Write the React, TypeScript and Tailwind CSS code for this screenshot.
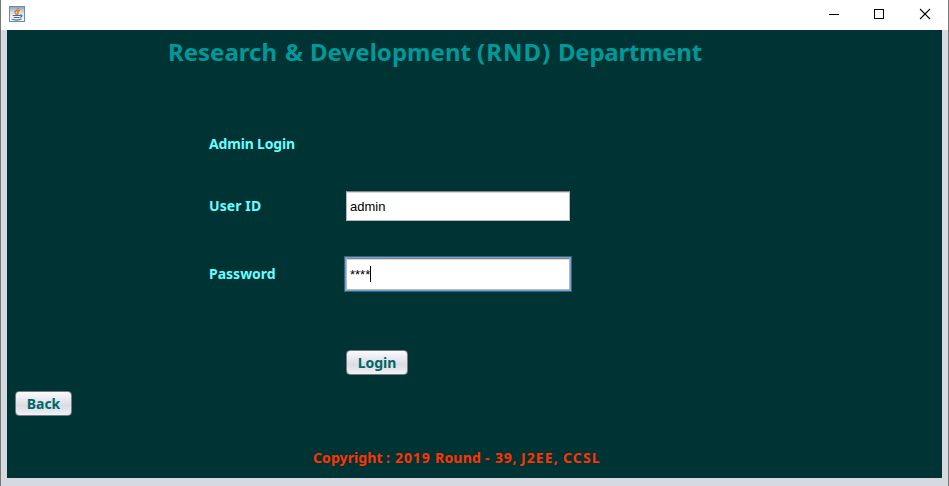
import type { ReactNode } from "react";

function JavaIcon() {
  return (
    <svg width="16" height="16" viewBox="0 0 16 16" className="block">
      <defs>
        <linearGradient id="tile" x1="0" y1="0" x2="0" y2="1">
          <stop offset="0" stopColor="#86a5bf" />
          <stop offset="0.45" stopColor="#dce5ed" />
          <stop offset="1" stopColor="#f7f8fa" />
        </linearGradient>
      </defs>
      <rect x="0.5" y="0.5" width="15" height="15" fill="url(#tile)" stroke="#6d8ba6" />
      <path d="M9.5 1.5C10 4 5.5 4.5 6 6.5C6.3 7.4 7.5 7.8 7.5 9M10.8 4.2C9 5 8 6 9 7.2C9.3 7.7 9 8.2 8.6 8.7" fill="none" stroke="#e87522" strokeWidth="1.5" />
      <path d="M3.8 9.5H11M4.8 11.5H10.3M2.8 13.3C6 14.3 10 14.1 12.5 13M11 9.3C13.8 8.6 13.5 11 10.8 11.5" fill="none" stroke="#426c91" strokeWidth="1.2" />
    </svg>
  );
}

function TitleBar() {
  return (
    <header className="flex h-[30px] items-start bg-white pl-2">
      <div className="pt-1.5"><JavaIcon /></div>
      <div className="ml-auto flex">
        <svg width="46" height="30" viewBox="0 0 46 30"><path d="M18 14.5H28" stroke="#000" /></svg>
        <svg width="46" height="30" viewBox="0 0 46 30"><rect x="17.5" y="9.5" width="9" height="9" fill="none" stroke="#000" /></svg>
        <svg width="45" height="30" viewBox="0 0 45 30"><path d="M17 9L27 19M27 9L17 19" stroke="#000" strokeWidth="1.1" /></svg>
      </div>
    </header>
  );
}

function FormButton({ children, className }: { children: ReactNode; className: string }) {
  return (
    <button className={`flex h-[25px] items-center justify-center rounded-[4px] border border-[#777b82] bg-linear-to-b from-[#fafafc] via-[#d9dce4] via-60% to-[#f0f2f6] text-[14px] leading-none font-bold text-[#006666] ${className}`}>
      {children}
    </button>
  );
}

export default function App() {
  return (
    <div className="h-[486px] w-[949px] overflow-hidden border-x border-[#777] bg-[#d6d9df] font-['Noto_Sans','Open_Sans',sans-serif]">
      <TitleBar />
      <main className="ml-1.5 h-[448px] w-[935px] bg-[#003333] whitespace-nowrap">
        <h1 className="flex h-[96px] pt-[5px] pl-[161px] text-[24px] leading-[34px] font-bold text-[#009999]">
          <span className="w-[117px]">Research </span>
          <span className="w-[25px]">&amp; </span>
          <span className="w-[167px] tracking-[0.05px]">Development </span>
          <span className="w-[81px] tracking-[1px]">(RND) </span>
          <span className="tracking-[-0.25px]">Department</span>
        </h1>
        <div className="ml-[202px] flex h-[224px] flex-col text-[14px] leading-none font-bold text-[#66ffff]">
          <h2 className="flex h-9 items-center tracking-[-0.17px]">Admin Login</h2>
          <div className="mt-[29px] flex h-[30px] items-center">
            <span className="w-[137px] tracking-[0.1px]">User ID</span>
            <div className="flex h-[30px] w-[224px] items-center border border-[#b8b8b8] border-t-[#858585] bg-white pl-[3px] font-['Liberation_Sans',sans-serif] text-[13px] font-normal text-black shadow-[inset_0_1px_0_#d8d8d8]">admin</div>
          </div>
          <div className="mt-[35px] flex h-9 items-center">
            <span className="w-[135px]">Password</span>
            <div className="h-9 w-[228px] border border-[#386383] bg-[#73a4d1] p-px">
              <div className="flex h-8 items-center border border-[#b8b8b8] border-t-[#858585] bg-white pl-[3px] font-['Liberation_Sans',sans-serif] text-[13px] font-normal text-black shadow-[inset_0_1px_0_#d8d8d8]">
                <span>****</span><span className="h-4 w-px bg-black" />
              </div>
            </div>
          </div>
        </div>
        <FormButton className="ml-[339px] w-[62px]">Login</FormButton>
        <FormButton className="mt-4 ml-2 w-[57px]">Back</FormButton>
        <footer className="mt-[33px] ml-[306px] flex text-[14px] leading-[18px] font-bold text-[#ff3300]">
          <span className="w-[73px] tracking-[0.1px]">Copyright </span>
          <span className="w-[9px]">: </span>
          <span className="w-[40px] tracking-[0.9px]">2019 </span>
          <span className="w-[50px] tracking-[0.2px]">Round </span>
          <span className="w-[10px] tracking-[0.5px]">- </span>
          <span className="w-[26px] tracking-[0.8px]">39, </span>
          <span className="w-[42px] tracking-[1.1px]">J2EE, </span>
          <span className="tracking-[1.1px]">CCSL</span>
        </footer>
      </main>
    </div>
  );
}
